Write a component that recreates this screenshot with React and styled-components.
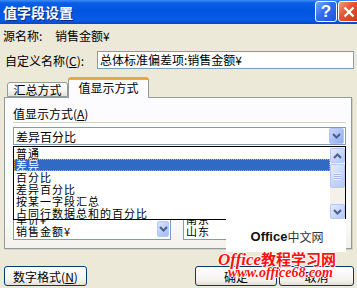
import React from "react";
import styled, { createGlobalStyle } from "styled-components";

const GlobalStyle = createGlobalStyle`
  html, body {
    margin: 0;
    padding: 0;
    background: #ece9d8;
  }
  body {
    font-family: "Noto Sans CJK SC", "Liberation Sans", sans-serif;
    font-size: 12px;
    color: #000;
  }
  * { box-sizing: border-box; }
`;

const Chevron = ({ up }) => (
  <svg width="9" height="6" viewBox="0 0 9 6">
    <path
      d={up ? "M1 5 L4.5 1.5 L8 5" : "M1 1 L4.5 4.5 L8 1"}
      fill="none"
      stroke="#4d6185"
      strokeWidth="2"
    />
  </svg>
);

const App = () => {
  const options = ["普通", "差异", "百分比", "差异百分比", "按某一字段汇总", "占同行数据总和的百分比"];

  return (
    <>
      <GlobalStyle />
      <Window>
        <TitleBar>
          <Title>值字段设置</Title>
          <TitleButtons>
            <TitleButton kind="help">?</TitleButton>
            <TitleButton kind="close">
              <svg width="12" height="12" viewBox="0 0 12 12">
                <path d="M1.5 1.5 L10.5 10.5 M10.5 1.5 L1.5 10.5" stroke="#fff" strokeWidth="2.4" />
              </svg>
            </TitleButton>
          </TitleButtons>
        </TitleBar>

        <Body>
          <SourceRow>
            <SourceLabel>源名称:</SourceLabel>
            <span>销售金额¥</span>
          </SourceRow>

          <NameRow>
            <NameLabel>
              自定义名称(<u>C</u>):
            </NameLabel>
            <TextInput>总体标准偏差项:销售金额¥</TextInput>
          </NameRow>

          <TabStrip>
            <Tab>汇总方式</Tab>
            <Tab active>值显示方式</Tab>
          </TabStrip>

          <Panel>
            <PanelLabel>
              值显示方式(<u>A</u>)
            </PanelLabel>
            <Separator />
            <Combo>
              <ComboText>差异百分比</ComboText>
              <ComboButton>
                <Chevron />
              </ComboButton>

              <DropList>
                <Options>
                  {options.map((o) => (
                    <Option key={o} selected={o === "差异"}>
                      {o}
                    </Option>
                  ))}
                </Options>
                <ScrollBar>
                  <ScrollButton>
                    <Chevron up />
                  </ScrollButton>
                  <Thumb>
                    <Grip />
                  </Thumb>
                  <Track />
                  <ScrollButton>
                    <Chevron />
                  </ScrollButton>
                </ScrollBar>
              </DropList>
            </Combo>

            <BaseRow>
              <BaseColumn width={158}>
                <PanelLabel>
                  基本字段(<u>F</u>):
                </PanelLabel>
                <ListBox>
                  <ListItems>
                    <ListItem>数量</ListItem>
                    <ListItem>单价¥</ListItem>
                    <ListItem>销售金额¥</ListItem>
                  </ListItems>
                  <ListScroll>
                    <SmallButton>
                      <Chevron />
                    </SmallButton>
                  </ListScroll>
                </ListBox>
              </BaseColumn>
              <BaseColumn width={163}>
                <PanelLabel>
                  基本项(<u>I</u>):
                </PanelLabel>
                <ListBox>
                  <ListItems>
                    <ListItem>上海</ListItem>
                    <ListItem>南京</ListItem>
                    <ListItem>山东</ListItem>
                  </ListItems>
                </ListBox>
              </BaseColumn>
            </BaseRow>
          </Panel>

          <Footer>
            <Button width={83}>
              数字格式(<u>N</u>)
            </Button>
            <Spacer />
            <Button width={82}>确定</Button>
            <Button width={75}>取消</Button>
          </Footer>
        </Body>

        <Watermark>
          <WhiteBox>
            <b>Office</b>中文网
          </WhiteBox>
          <RedLine>
            <i>Office</i>教程学习网
          </RedLine>
          <RedUrl>www.office68.com</RedUrl>
        </Watermark>
      </Window>
    </>
  );
};

export default App;

// STYLING ****************

const Window = styled.div`
  position: relative;
  width: 357px;
  height: 288px;
  overflow: hidden;
  background: #ece9d8;
  display: flex;
  flex-direction: column;
`;

const TitleBar = styled.div`
  height: 24px;
  flex: none;
  display: flex;
  align-items: center;
  justify-content: space-between;
  padding-left: 3px;
  background: linear-gradient(
    to bottom,
    #3d8ff5 0%,
    #0b5fe6 12%,
    #0055e0 45%,
    #0a5be6 85%,
    #0347c8 100%
  );
`;

const Title = styled.div`
  color: #fff;
  font-weight: bold;
  font-size: 14px;
  line-height: 16px;
  text-shadow: 1px 1px 0 #0b2a8a;
`;

const TitleButtons = styled.div`
  display: flex;
  gap: 1px;
  margin-right: -3px;
  align-self: flex-start;
  margin-top: 1px;
`;

const TitleButton = styled.div`
  width: 22px;
  height: 21px;
  border: 1px solid #fff;
  border-radius: 3px;
  display: flex;
  align-items: center;
  justify-content: center;
  color: #fff;
  font-family: "Liberation Sans", sans-serif;
  font-weight: bold;
  font-size: 17px;
  background: ${({ kind }) =>
    kind === "close"
      ? "linear-gradient(135deg, #f59a78 0%, #e2522c 45%, #cc3a14 100%)"
      : "linear-gradient(135deg, #7aa6fb 0%, #2f6cf0 45%, #1c55de 100%)"};
`;

const Body = styled.div`
  flex: 1;
  display: flex;
  flex-direction: column;
  padding: 0 3px 0 4px;
`;

const SourceRow = styled.div`
  margin-top: 5px;
  margin-left: -1px;
  height: 13px;
  line-height: 13px;
  display: flex;
`;

const SourceLabel = styled.span`
  width: 52px;
`;

const NameRow = styled.div`
  margin-top: 9px;
  height: 18px;
  display: flex;
  align-items: center;
`;

const NameLabel = styled.div`
  width: 93px;
  padding-left: 1px;
  line-height: 13px;
`;

const TextInput = styled.div`
  flex: 1;
  height: 18px;
  border: 1px solid #7f9db9;
  background: #fff;
  padding-left: 2px;
  line-height: 15px;
`;

const TabStrip = styled.div`
  margin-top: 8px;
  height: 21px;
  margin-bottom: -1px;
  padding-left: 3px;
  display: flex;
  align-items: flex-end;
  position: relative;
  z-index: 1;
`;

const Tab = styled.div`
  width: ${({ active }) => (active ? 81 : 61)}px;
  height: ${({ active }) => (active ? 21 : 15)}px;
  margin-bottom: ${({ active }) => (active ? 0 : 1)}px;
  border: 1px solid #919b9c;
  border-bottom: ${({ active }) => (active ? "none" : "1px solid #919b9c")};
  border-top: ${({ active }) => (active ? "3px solid #f2a63a" : "1px solid #919b9c")};
  border-radius: 3px 3px 0 0;
  background: ${({ active }) =>
    active ? "#fcfcfe" : "linear-gradient(to bottom, #ffffff 0%, #f3f3ef 60%, #e4e3dc 100%)"};
  display: flex;
  align-items: center;
  justify-content: center;
  padding-bottom: ${({ active }) => (active ? 2 : 0)}px;
  line-height: 12px;
`;

const Panel = styled.div`
  width: 348px;
  height: 152px;
  border: 1px solid #919b9c;
  background: linear-gradient(to bottom, #fcfcfe 0%, #fbfbfa 80%, #f2f1eb 100%);
  box-shadow: 1px 1px 0 #d4d0c4;
  padding: 9px 5px 8px 8px;
  display: flex;
  flex-direction: column;
`;

const PanelLabel = styled.div`
  height: 13px;
  line-height: 13px;
`;

const Separator = styled.div`
  margin-top: 2px;
  height: 2px;
  border-top: 1px solid #d0d0bf;
  border-bottom: 1px solid #fff;
`;

const Combo = styled.div`
  position: relative;
  margin-top: 3px;
  height: 18px;
  border: 1px solid #7f9db9;
  background: #fff;
  display: flex;
  align-items: center;
  justify-content: space-between;
`;

const ComboText = styled.div`
  padding-left: 2px;
  line-height: 13px;
`;

const ComboButton = styled.div`
  width: 15px;
  height: 16px;
  margin-right: 1px;
  border: 1px solid #b1c4f5;
  border-radius: 2px;
  background: linear-gradient(135deg, #c9d8fc 0%, #a9bff7 55%, #8fa9f0 100%);
  display: flex;
  align-items: center;
  justify-content: center;
`;

const DropList = styled.div`
  position: absolute;
  top: 18px;
  left: -1px;
  width: 333px;
  height: 74px;
  border: 1px solid #000;
  background: #fff;
  display: flex;
  z-index: 3;
`;

const Options = styled.div`
  flex: 1;
  display: flex;
  flex-direction: column;
`;

const Option = styled.div`
  height: 12px;
  line-height: 12px;
  font-size: 11px;
  letter-spacing: 1px;
  padding-left: 2px;
  white-space: nowrap;
  background: ${({ selected }) => (selected ? "#316ac5" : "transparent")};
  color: ${({ selected }) => (selected ? "#fff" : "#000")};
  outline: ${({ selected }) => (selected ? "1px dotted #e9a640" : "none")};
  outline-offset: -1px;
`;

const ScrollBar = styled.div`
  width: 15px;
  display: flex;
  flex-direction: column;
  background: #f3f1ea;
  padding-top: 1px;
`;

const ScrollButton = styled.div`
  width: 15px;
  height: 15px;
  flex: none;
  border: 1px solid #b6c9f6;
  border-radius: 2px;
  background: linear-gradient(135deg, #e4ecff 0%, #c6d6fc 55%, #b3c8f8 100%);
  display: flex;
  align-items: center;
  justify-content: center;
`;

const Thumb = styled(ScrollButton)`
  height: 24px;
  margin-top: 1px;
`;

const Grip = styled.div`
  width: 7px;
  height: 7px;
  background: repeating-linear-gradient(
    to bottom,
    #eef3ff 0px,
    #eef3ff 1px,
    #9fb5ee 1px,
    #9fb5ee 2px
  );
`;

const Track = styled.div`
  flex: 1;
`;

const BaseRow = styled.div`
  margin-top: auto;
  display: flex;
  gap: 12px;
`;

const BaseColumn = styled.div`
  width: ${({ width }) => width}px;
  display: flex;
  flex-direction: column;
  gap: 3px;
`;

const ListBox = styled.div`
  height: 77px;
  border: 1px solid #7f9db9;
  background: #fff;
  display: flex;
  padding-bottom: 2px;
`;

const ListItems = styled.div`
  flex: 1;
  display: flex;
  flex-direction: column;
  justify-content: flex-end;
  padding-left: 2px;
`;

const ListItem = styled.div`
  height: 12px;
  line-height: 12px;
  font-size: 11px;
  letter-spacing: 1px;
  white-space: nowrap;
`;

const ListScroll = styled.div`
  width: 13px;
  display: flex;
  align-items: flex-end;
`;

const SmallButton = styled(ScrollButton)`
  width: 12px;
  height: 16px;
  background: linear-gradient(135deg, #d9e4ff 0%, #b9cdfa 55%, #a5bdf6 100%);
`;

const Footer = styled.div`
  margin-top: 17px;
  display: flex;
  gap: 2px;
`;

const Spacer = styled.div`
  flex: 1;
`;

const Button = styled.div`
  width: ${({ width }) => width}px;
  height: 20px;
  border: 1px solid #003c74;
  border-radius: 3px;
  background: linear-gradient(to bottom, #ffffff 0%, #f5f4ef 70%, #e3e0d6 100%);
  display: flex;
  align-items: center;
  justify-content: center;
  line-height: 13px;
`;

const Watermark = styled.div`
  position: absolute;
  left: 218px;
  top: 219px;
  width: 132px;
  z-index: 5;
`;

const WhiteBox = styled.div`
  margin-left: 8px;
  width: 120px;
  height: 33px;
  background: #fff;
  display: flex;
  align-items: center;
  justify-content: center;
  padding-left: 2px;
  padding-top: 2px;
  font-size: 12px;
  color: #333;

  b {
    font-family: "Liberation Sans", sans-serif;
    font-size: 13px;
    color: #111;
  }
`;

const RedLine = styled.div`
  height: 14px;
  line-height: 14px;
  font-size: 15px;
  font-weight: bold;
  color: #ff1010;
  white-space: nowrap;
  text-shadow: 1px 0 0 #fff, -1px 0 0 #fff, 0 1px 0 #fff, 0 -1px 0 #fff;

  i {
    font-family: "Liberation Serif", serif;
    font-size: 17px;
  }
`;

const RedUrl = styled.div`
  margin-left: 10px;
  height: 13px;
  line-height: 13px;
  font-family: "Liberation Serif", serif;
  font-style: italic;
  font-weight: bold;
  font-size: 14px;
  color: #ff1010;
  white-space: nowrap;
  text-shadow: 1px 0 0 #fff, -1px 0 0 #fff, 0 1px 0 #fff, 0 -1px 0 #fff;
`;
